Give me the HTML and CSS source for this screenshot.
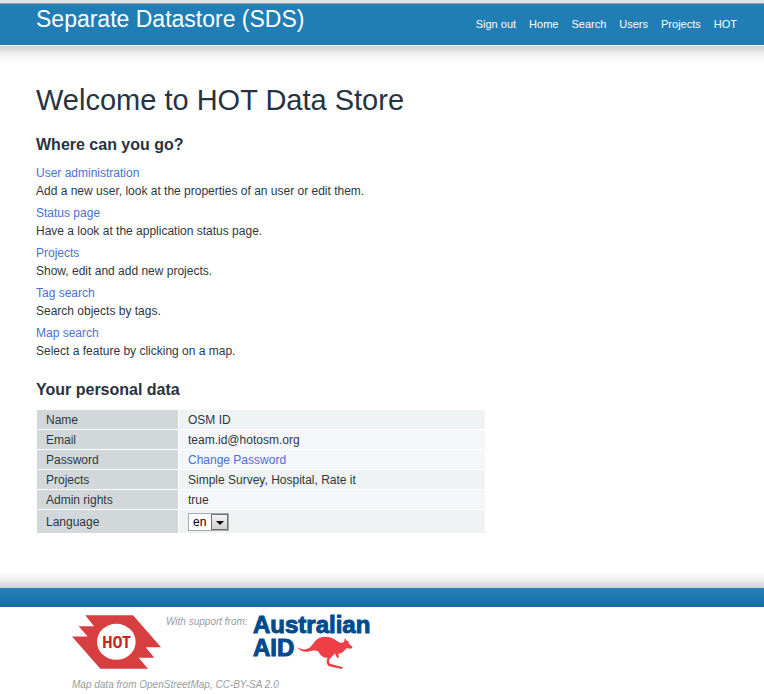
FILE: index.html
```html
<!DOCTYPE html>
<html lang="en">
<head>
<meta charset="utf-8">
<title>Separate Datastore (SDS)</title>
<link rel="stylesheet" href="styles.css">
</head>
<body>
<header class="site-header">
  <div class="site-title">Separate Datastore (SDS)</div>
  <nav class="site-nav">
    <a href="#">Sign out</a>
    <a href="#">Home</a>
    <a href="#">Search</a>
    <a href="#">Users</a>
    <a href="#">Projects</a>
    <a href="#">HOT</a>
  </nav>
</header>
<main class="content">
  <h1>Welcome to HOT Data Store</h1>
  <h2>Where can you go?</h2>
  <dl class="destinations">
    <div><dt><a href="#">User administration</a></dt><dd>Add a new user, look at the properties of an user or edit them.</dd></div>
    <div><dt><a href="#">Status page</a></dt><dd>Have a look at the application status page.</dd></div>
    <div><dt><a href="#">Projects</a></dt><dd>Show, edit and add new projects.</dd></div>
    <div><dt><a href="#">Tag search</a></dt><dd>Search objects by tags.</dd></div>
    <div><dt><a href="#">Map search</a></dt><dd>Select a feature by clicking on a map.</dd></div>
  </dl>
  <h2>Your personal data</h2>
  <table class="profile">
    <tr class="tinted"><th scope="row">Name</th><td>OSM ID</td></tr>
    <tr><th scope="row">Email</th><td>team.id@hotosm.org</td></tr>
    <tr><th scope="row">Password</th><td><a href="#">Change Password</a></td></tr>
    <tr class="tinted"><th scope="row">Projects</th><td>Simple Survey, Hospital, Rate it</td></tr>
    <tr><th scope="row">Admin rights</th><td>true</td></tr>
    <tr class="tinted"><th scope="row"><label for="language">Language</label></th><td class="language-cell"><span class="picker"><select id="language"><option>en</option></select></span></td></tr>
  </table>
</main>
<footer class="site-footer">
  <div class="sponsors">
    <svg class="hot-logo" viewBox="36 30 267 161" role="img" aria-label="HOT">
      <path fill="#d73e40" d="M76 30H219L303 126H257L283 158H236L264 191H121L36 94H83L56 63H102Z"/>
      <ellipse cx="169" cy="110" rx="58" ry="54" fill="#fff"/>
      <text class="hot-text" x="170" y="130" text-anchor="middle">HOT</text>
    </svg>
    <span class="support">With support from:</span>
    <svg class="aid-logo" viewBox="0 0 120 55" role="img" aria-label="Australian AID">
      <text class="aid-text" x="0" y="18">Australian</text>
      <text class="aid-text" x="0" y="41">AID</text>
      <path fill="#ef3e46" transform="translate(44 22) scale(.3333)" d="M0 30C12 38 25 40 35 34C48 25 53 8 68 2C84-4 103-1 116 9C126 17 134 20 141 15L144 3L150 13L154 11L156 20L167 30L162 35L148 34C144 40 138 48 130 49L124 50L126 62L119 61L114 49C107 59 96 64 96 73L99 80L138 91L134 96L94 87C88 77 87 70 92 62C78 63 70 55 65 44C56 38 44 42 33 44C18 45 6 40 0 30Z"/>
    </svg>
  </div>
  <p class="credit">Map data from OpenStreetMap, CC-BY-SA 2.0</p>
</footer>
</body>
</html>
```
FILE: styles.css
```css
* { box-sizing: border-box; }

body {
  margin: 0;
  background: #fff;
  color: #2e3740;
  font: 12px/18px "Liberation Sans", Arial, sans-serif;
}

a { color: #4c6fd3; text-decoration: none; }

.site-header {
  display: flex;
  justify-content: space-between;
  align-items: flex-start;
  height: 45px;
  padding: 0 27px 0 36px;
  background: #217eb4;
  border-top: 3px solid #e3e3e3;
  box-shadow: inset 0 1px #8fa3ae;
  color: #fff;
}

.site-title { font-size: 23px; line-height: 32px; }

.site-nav {
  display: flex;
  gap: 13px;
  padding-top: 12px;
  font-size: 11px;
}

.site-nav a { color: #fff; }

.content {
  padding: 39px 36px 54px;
  background:
    linear-gradient(#d0d0d0, #f2f2f2 50%, #fff) 0 1px / 100% 17px no-repeat,
    linear-gradient(#fff, #f0f0f0 50%, #d0d0d0) 0 100% / 100% 17px no-repeat;
}

h1 {
  margin: 0 0 19px;
  color: #27333f;
  font-size: 29px;
  font-weight: normal;
  line-height: 32px;
}

h2 {
  margin: 0 0 9px;
  color: #27333f;
  font-size: 16px;
  line-height: 20px;
}

.destinations {
  display: grid;
  gap: 4px;
  margin: 0 0 20px;
}

.destinations dd { margin: 0; }

.profile {
  width: 450px;
  max-width: 100%;
  border-spacing: 1px;
}

.profile th,
.profile td {
  padding: 1px 9px 0;
  text-align: left;
  font-weight: normal;
}

.profile th { width: 141px; background: #d2d8da; }
.profile td { background: #f4f6f9; }
.profile .tinted td { background: #eff3f4; }
.profile .language-cell { padding: 3px 9px 2px; }

.picker { position: relative; display: block; width: 41px; }

.picker::before,
.picker::after { box-sizing: border-box; }

select {
  display: block;
  width: 100%;
  height: 18px;
  padding: 0 0 0 4px;
  appearance: none;
  border: 1px solid #a5a9ad;
  border-radius: 0;
  background: #fff;
  color: #000;
  font: inherit;
  line-height: 16px;
}

.picker::before {
  content: "";
  position: absolute;
  top: 1px;
  right: 1px;
  width: 17px;
  height: 16px;
  border: 1px solid #707070;
  background: linear-gradient(#f4f4f4, #d0d0d0);
  pointer-events: none;
}

.picker::after {
  content: "";
  position: absolute;
  top: 8px;
  right: 5px;
  border: 4px solid transparent;
  border-top-color: #000;
  border-bottom: 0;
  pointer-events: none;
}

.site-footer {
  padding: 8px 72px;
  background: linear-gradient(#2583b9, #176ca3) 0 0 / 100% 19px no-repeat;
  color: #9c9c9c;
  font-size: 10px;
  font-style: italic;
}

.sponsors {
  display: flex;
  align-items: flex-start;
  gap: 5px;
  padding-top: 19px;
  line-height: 14px;
}

.hot-logo { width: 89px; height: 54px; }
.aid-logo { width: 120px; height: 55px; overflow: visible; }

.hot-text {
  fill: #cf2228;
  font: bold 50px "Liberation Sans Narrow", "Roboto Condensed", "Liberation Sans", sans-serif;
}

.aid-text {
  fill: #004b8d;
  stroke: #004b8d;
  stroke-width: 1px;
  font: bold 24px "Liberation Sans", Arial, sans-serif;
}

.credit { margin: 6px 0 0; }
```
